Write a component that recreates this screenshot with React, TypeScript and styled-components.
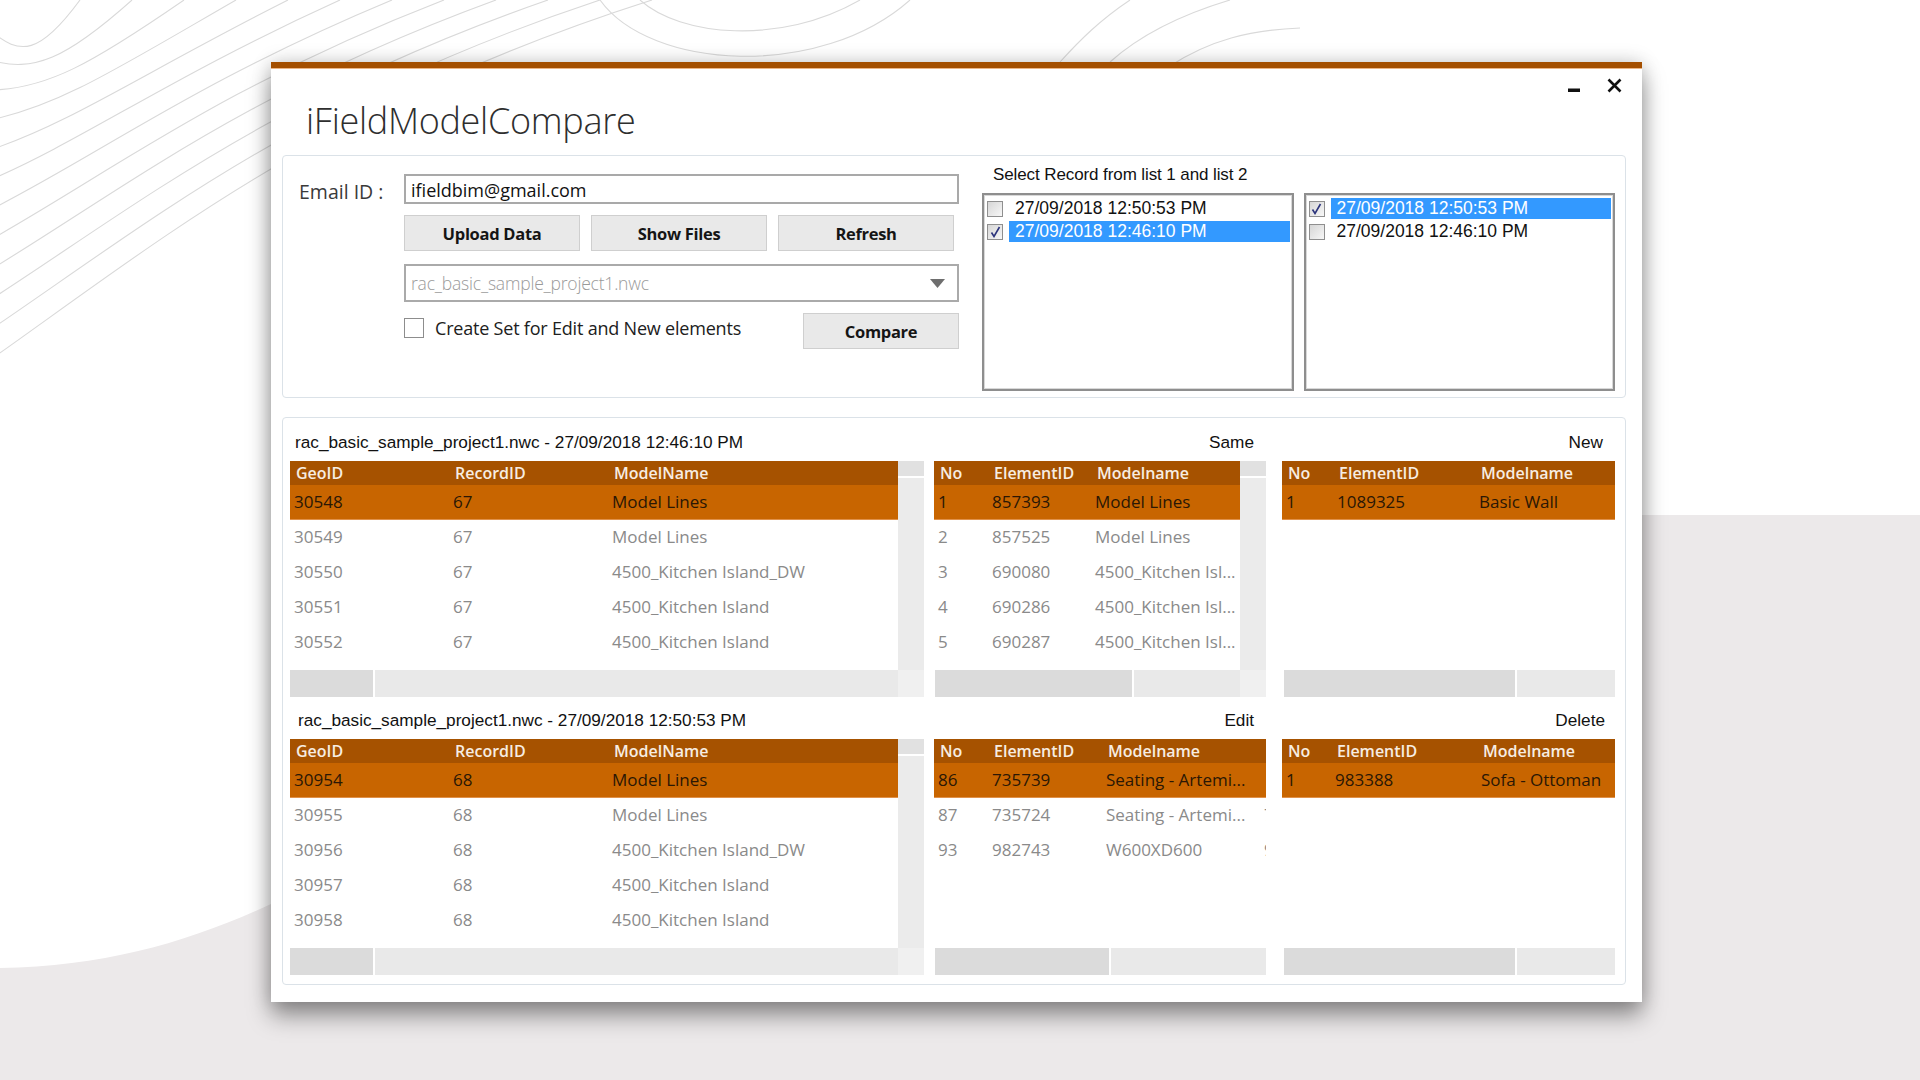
import React from "react";
import styled, { createGlobalStyle } from "styled-components";

const GlobalStyle = createGlobalStyle`
  html, body {
    margin: 0;
    padding: 0;
  }
  body {
    width: 1920px;
    height: 1080px;
    overflow: hidden;
    background: #ffffff;
    font-family: "Open Sans", "Noto Sans", sans-serif;
  }
  * {
    box-sizing: border-box;
  }
`;

const Page = styled.div`
  position: relative;
  width: 1920px;
  height: 1080px;
  overflow: hidden;
  padding: 62px 0 0 271px;
`;

const Backdrop = styled.svg`
  position: absolute;
  left: 0;
  top: 0;
  width: 1920px;
  height: 1080px;
`;

const Window = styled.div`
  position: relative;
  width: 1371px;
  height: 940px;
  background: #ffffff;
  border-top: 6px solid #a44f00;
  box-shadow: 0 14px 22px rgba(0, 0, 0, 0.38), 0 0 18px rgba(0, 0, 0, 0.18);
  display: flex;
  flex-direction: column;
  padding: 0 16px 17px 11px;
`;

const TitleBar = styled.div`
  height: 87px;
  flex: none;
  display: flex;
  justify-content: space-between;
  align-items: flex-start;
  border-top: 1px solid #ecb585;
  margin: 0 -16px 0 -11px;
  padding: 0 20px 0 35px;
`;

const Title = styled.h1`
  margin: 31px 0 0;
  font-size: 36px;
  line-height: 42px;
  font-weight: 300;
  color: #2e2e2e;
  letter-spacing: -0.3px;
`;

const WindowControls = styled.div`
  margin-top: 9px;
  display: flex;
  align-items: flex-end;
  gap: 27px;
`;

const GroupBox = styled.div`
  border: 1px solid #dbe2e8;
  border-radius: 4px;
  flex: none;
`;

const TopGroup = styled(GroupBox)`
  height: 243px;
  display: flex;
  padding: 0 10px 0 16px;
`;

const FormGrid = styled.div`
  margin-top: 18px;
  display: grid;
  grid-template-columns: 105px 555px;
  grid-template-rows: 30px 36px 40px 36px;
  row-gap: 11px;
  align-self: flex-start;
`;

const FieldLabel = styled.label`
  font-size: 19.5px;
  color: #3a3a3a;
  line-height: 30px;
  padding-top: 3px;
`;

const TextInput = styled.div`
  border: 2px solid #a9a9a9;
  padding: 3px 5px 0;
  font-size: 18px;
  line-height: 23px;
  color: #111111;
`;

const ButtonRow = styled.div`
  grid-column: 2;
  display: flex;
  gap: 11px;
`;

const Button = styled.button<{ $width?: number }>`
  width: ${(p) => p.$width ?? 176}px;
  height: 36px;
  background: #e9e9e9;
  border: 1px solid #cfcfcf;
  font-family: inherit;
  font-size: 16.5px;
  font-weight: 700;
  color: #151515;
  padding: 0;
  letter-spacing: -0.3px;
`;

const Dropdown = styled.div`
  grid-column: 2;
  align-self: end;
  height: 38px;
  border: 2px solid #aaaaaa;
  display: flex;
  align-items: center;
  justify-content: space-between;
  padding: 0 12px 0 5px;
`;

const Placeholder = styled.span`
  font-size: 17.5px;
  font-weight: 300;
  color: #9a9a9a;
  letter-spacing: -0.2px;
`;

const OptionRow = styled.div`
  grid-column: 2;
  display: flex;
  align-items: center;
`;

const Tick = styled.span`
  width: 20px;
  height: 20px;
  border: 1.5px solid #8d8d8d;
  background: #ffffff;
  flex: none;
  margin-top: -6px;
`;

const OptionText = styled.span`
  margin-left: 11px;
  margin-top: -6px;
  font-size: 18px;
  color: #202020;
  letter-spacing: -0.2px;
`;

const CompareButton = styled(Button)`
  margin-left: auto;
`;

const RecordPicker = styled.div`
  margin-left: 23px;
  width: 633px;
  padding-top: 9px;
  display: flex;
  flex-direction: column;
`;

const PickerCaption = styled.div`
  margin-left: 11px;
  height: 20px;
  line-height: 20px;
  margin-bottom: 8px;
  font-family: "Liberation Sans", Arial, sans-serif;
  font-size: 17px;
  letter-spacing: -0.1px;
  color: #111111;
`;

const ListPair = styled.div`
  display: flex;
  gap: 10px;
`;

const CheckList = styled.div`
  flex: 1;
  height: 198px;
  border: 2px solid #8e8e8e;
  box-shadow: inset 0 0 0 1px #d8d8d8;
  padding: 2px 2px 0 3px;
  background: #ffffff;
`;

const ListItem = styled.div`
  height: 23px;
  display: flex;
  align-items: center;
`;

const ItemBox = styled.span`
  width: 16px;
  height: 16px;
  flex: none;
  border: 1px solid #8f8f8f;
  background: linear-gradient(135deg, #d6d6d6 0%, #f7f7f7 100%);
  display: flex;
  align-items: center;
  justify-content: center;
`;

const ItemLabel = styled.span<{ $selected: boolean }>`
  margin-left: 6px;
  flex: 1;
  height: 21px;
  line-height: 21px;
  padding-left: 6px;
  font-family: "Liberation Sans", Arial, sans-serif;
  font-size: 17.5px;
  background: ${(p) => (p.$selected ? "#3399ff" : "transparent")};
  color: ${(p) => (p.$selected ? "#ffffff" : "#111111")};
`;

const BottomGroup = styled(GroupBox)`
  margin-top: 19px;
  height: 568px;
  padding: 13px 9px 9px 7px;
  display: flex;
  flex-direction: column;
  gap: 12px;
`;

const Section = styled.div`
  display: flex;
`;

const Panel = styled.div<{ $width: number; $offset: number }>`
  width: ${(p) => p.$width}px;
  margin-left: ${(p) => p.$offset}px;
  display: flex;
  flex-direction: column;
  gap: 8px;
`;

const Caption = styled.div<{ $align: "left" | "right"; $pad: number }>`
  height: 22px;
  line-height: 22px;
  text-align: ${(p) => p.$align};
  padding: ${(p) => (p.$align === "left" ? `0 0 0 ${p.$pad}px` : `0 ${p.$pad}px 0 0`)};
  font-family: "Liberation Sans", Arial, sans-serif;
  font-size: 17.2px;
  color: #111111;
  white-space: nowrap;
`;

const DataGrid = styled.div<{ $vscroll: boolean }>`
  height: 236px;
  display: grid;
  grid-template-columns: ${(p) => (p.$vscroll ? "1fr 26px" : "1fr")};
  grid-template-rows: 1fr 27px;
`;

const Table = styled.div`
  overflow: hidden;
  display: flex;
  flex-direction: column;
`;

const HeaderRow = styled.div<{ $cols: string }>`
  height: 24px;
  flex: none;
  display: grid;
  grid-template-columns: ${(p) => p.$cols};
  background: #a65200;
  color: #f7ede2;
  font-size: 16px;
  font-weight: 600;
  line-height: 24px;
`;

const HeadCell = styled.div`
  padding-left: 6px;
  white-space: nowrap;
  overflow: hidden;
`;

const BodyRow = styled.div<{ $cols: string; $selected: boolean }>`
  height: 35px;
  flex: none;
  display: grid;
  grid-template-columns: ${(p) => p.$cols};
  background: ${(p) => (p.$selected ? "#c86500" : "#ffffff")};
  color: ${(p) => (p.$selected ? "#2a1705" : "#8a8a8a")};
  border-bottom: ${(p) => (p.$selected ? "1px solid #e0914a" : "none")};
  font-size: 17px;
  line-height: 34px;
`;

const Cell = styled.div`
  padding-left: 4px;
  white-space: nowrap;
  overflow: hidden;
`;

const VScroll = styled.div`
  display: flex;
  flex-direction: column;
  gap: 2px;
`;

const VScrollCap = styled.div`
  height: 15px;
  background: #e1e1e1;
`;

const VScrollTrack = styled.div`
  flex: 1;
  background: #ebebeb;
`;

const HScroll = styled.div<{ $inset: number }>`
  display: flex;
  gap: 2px;
  padding-left: ${(p) => p.$inset}px;
`;

const HThumb = styled.div<{ $width: number }>`
  width: ${(p) => p.$width}px;
  background: #dbdbdb;
`;

const HTrack = styled.div`
  flex: 1;
  background: #e9e9e9;
`;

const Corner = styled.div`
  background: #f0f0f0;
`;

type GridSpec = {
  caption: string;
  align: "left" | "right";
  pad: number;
  width: number;
  offset: number;
  cols: string;
  headers: string[];
  rows: string[][];
  vscroll: boolean;
  thumb: number;
  inset: number;
};

const geoHeaders = ["GeoID", "RecordID", "ModelName"];
const elemHeaders = ["No", "ElementID", "Modelname"];

const sections: GridSpec[][] = [
  [
    {
      caption: "rac_basic_sample_project1.nwc - 27/09/2018 12:46:10 PM",
      align: "left",
      pad: 5,
      width: 634,
      offset: 0,
      cols: "159px 159px 1fr",
      headers: geoHeaders,
      rows: [
        ["30548", "67", "Model Lines"],
        ["30549", "67", "Model Lines"],
        ["30550", "67", "4500_Kitchen Island_DW"],
        ["30551", "67", "4500_Kitchen Island"],
        ["30552", "67", "4500_Kitchen Island"],
      ],
      vscroll: true,
      thumb: 83,
      inset: 0,
    },
    {
      caption: "Same",
      align: "right",
      pad: 12,
      width: 332,
      offset: 10,
      cols: "54px 103px 1fr",
      headers: elemHeaders,
      rows: [
        ["1", "857393", "Model Lines"],
        ["2", "857525", "Model Lines"],
        ["3", "690080", "4500_Kitchen Isl..."],
        ["4", "690286", "4500_Kitchen Isl..."],
        ["5", "690287", "4500_Kitchen Isl..."],
      ],
      vscroll: true,
      thumb: 197,
      inset: 1,
    },
    {
      caption: "New",
      align: "right",
      pad: 12,
      width: 333,
      offset: 16,
      cols: "51px 142px 1fr",
      headers: elemHeaders,
      rows: [["1", "1089325", "Basic Wall"]],
      vscroll: false,
      thumb: 231,
      inset: 2,
    },
  ],
  [
    {
      caption: "rac_basic_sample_project1.nwc - 27/09/2018 12:50:53 PM",
      align: "left",
      pad: 8,
      width: 634,
      offset: 0,
      cols: "159px 159px 1fr",
      headers: geoHeaders,
      rows: [
        ["30954", "68", "Model Lines"],
        ["30955", "68", "Model Lines"],
        ["30956", "68", "4500_Kitchen Island_DW"],
        ["30957", "68", "4500_Kitchen Island"],
        ["30958", "68", "4500_Kitchen Island"],
      ],
      vscroll: true,
      thumb: 83,
      inset: 0,
    },
    {
      caption: "Edit",
      align: "right",
      pad: 12,
      width: 332,
      offset: 10,
      cols: "54px 114px 158px 1fr",
      headers: [...elemHeaders, ""],
      rows: [
        ["86", "735739", "Seating - Artemi...", ""],
        ["87", "735724", "Seating - Artemi...", "735724"],
        ["93", "982743", "W600XD600", "982743"],
      ],
      vscroll: false,
      thumb: 174,
      inset: 1,
    },
    {
      caption: "Delete",
      align: "right",
      pad: 10,
      width: 333,
      offset: 16,
      cols: "49px 146px 1fr",
      headers: elemHeaders,
      rows: [["1", "983388", "Sofa - Ottoman"]],
      vscroll: false,
      thumb: 231,
      inset: 2,
    },
  ],
];

const records = ["27/09/2018 12:50:53 PM", "27/09/2018 12:46:10 PM"];

const CheckMark = () => (
  <svg width="11" height="12" viewBox="0 0 11 12">
    <path d="M1.5 6.5 L4 10.5 L9.5 1" fill="none" stroke="#2c347c" strokeWidth="1.6" />
  </svg>
);

const RecordList = ({ picked }: { picked: number }) => (
  <CheckList>
    {records.map((r, i) => (
      <ListItem key={r}>
        <ItemBox>{i === picked && <CheckMark />}</ItemBox>
        <ItemLabel $selected={i === picked}>{r}</ItemLabel>
      </ListItem>
    ))}
  </CheckList>
);

const Grid = ({ spec }: { spec: GridSpec }) => (
  <Panel $width={spec.width} $offset={spec.offset}>
    <Caption $align={spec.align} $pad={spec.pad}>
      {spec.caption}
    </Caption>
    <DataGrid $vscroll={spec.vscroll}>
      <Table>
        <HeaderRow $cols={spec.cols}>
          {spec.headers.map((h, i) => (
            <HeadCell key={i}>{h}</HeadCell>
          ))}
        </HeaderRow>
        {spec.rows.map((row, i) => (
          <BodyRow key={i} $cols={spec.cols} $selected={i === 0}>
            {row.map((c, j) => (
              <Cell key={j}>{c}</Cell>
            ))}
          </BodyRow>
        ))}
      </Table>
      {spec.vscroll && (
        <VScroll>
          <VScrollCap />
          <VScrollTrack />
        </VScroll>
      )}
      <HScroll $inset={spec.inset}>
        <HThumb $width={spec.thumb} />
        <HTrack />
      </HScroll>
      {spec.vscroll && <Corner />}
    </DataGrid>
  </Panel>
);

const contours = Array.from({ length: 12 }, (_, k) => {
  const x1 = 80 + 52 * k;
  const y0 = 30 + 30 * k;
  return `M -10 ${y0} C ${x1 * 0.25} ${y0 * 0.55 + 40}, ${x1 * 0.5} ${y0 * 0.15 + 50}, ${x1} 0`;
});

const App = () => {
  return (
    <Page>
      <GlobalStyle />
      <Backdrop viewBox="0 0 1920 1080">
        <path
          d="M0 968 C 120 966, 210 935, 300 890 L 1000 515 L 1920 515 L 1920 1080 L 0 1080 Z"
          fill="#ece9ea"
        />
        <g fill="none" stroke="#d9d9d9" strokeWidth="1.1">
          {contours.map((d, i) => (
            <path key={i} d={d} />
          ))}
          <path d="M 640 0 C 680 36, 780 46, 860 0" />
          <path d="M 600 0 C 650 70, 820 80, 910 0" />
          <path d="M 1060 62 C 1080 40, 1100 20, 1130 0" />
          <path d="M 1110 62 C 1140 35, 1180 15, 1230 0" />
          <path d="M 1170 66 C 1210 40, 1250 30, 1300 28" />
        </g>
      </Backdrop>
      <Window>
        <TitleBar>
          <Title>iFieldModelCompare</Title>
          <WindowControls>
            <svg width="12" height="5" viewBox="0 0 12 5">
              <rect x="0" y="0.5" width="12" height="3.5" fill="#111" />
            </svg>
            <svg width="15" height="15" viewBox="0 0 15 15">
              <path d="M1.5 1.5 L13.5 13.5 M13.5 1.5 L1.5 13.5" stroke="#111" strokeWidth="2.6" />
            </svg>
          </WindowControls>
        </TitleBar>
        <TopGroup>
          <FormGrid>
            <FieldLabel>Email ID :</FieldLabel>
            <TextInput>ifieldbim@gmail.com</TextInput>
            <ButtonRow>
              <Button>Upload Data</Button>
              <Button>Show Files</Button>
              <Button>Refresh</Button>
            </ButtonRow>
            <Dropdown>
              <Placeholder>rac_basic_sample_project1.nwc</Placeholder>
              <svg width="15" height="9" viewBox="0 0 15 9">
                <path d="M0 0 L15 0 L7.5 9 Z" fill="#6e6e6e" />
              </svg>
            </Dropdown>
            <OptionRow>
              <Tick />
              <OptionText>Create Set for Edit and New elements</OptionText>
              <CompareButton $width={156}>Compare</CompareButton>
            </OptionRow>
          </FormGrid>
          <RecordPicker>
            <PickerCaption>Select Record from list 1 and list 2</PickerCaption>
            <ListPair>
              <RecordList picked={1} />
              <RecordList picked={0} />
            </ListPair>
          </RecordPicker>
        </TopGroup>
        <BottomGroup>
          {sections.map((grids, i) => (
            <Section key={i}>
              {grids.map((g) => (
                <Grid key={g.caption} spec={g} />
              ))}
            </Section>
          ))}
        </BottomGroup>
      </Window>
    </Page>
  );
};

export default App;
